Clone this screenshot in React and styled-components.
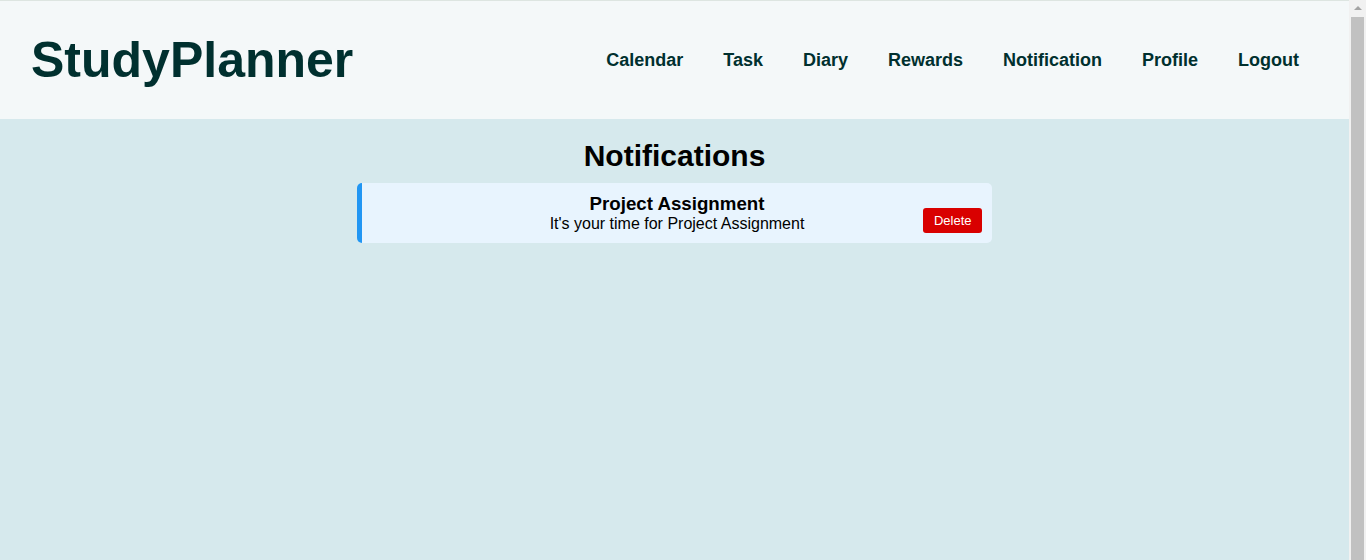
import React from "react";
import styled, { createGlobalStyle } from "styled-components";

const GlobalStyle = createGlobalStyle`
  html, body {
    margin: 0;
    padding: 0;
    overflow: hidden;
  }
  body {
    font-family: "Liberation Sans", Arial, sans-serif;
    background: #d6e9ed;
  }
  * { box-sizing: border-box; }
`;

const Shell = styled.div`
  display: flex;
  height: 100vh;
`;

const Page = styled.div`
  flex: 1;
  min-width: 0;
  display: flex;
  flex-direction: column;
  background: #d6e9ed;
`;

const ScrollTrack = styled.div`
  width: 17px;
  flex: none;
  display: flex;
  flex-direction: column;
  background: #f1f1f1;
`;

const ScrollButton = styled.div`
  height: 17px;
  display: flex;
  align-items: center;
  justify-content: center;
  &::before {
    content: "";
    width: 0;
    height: 0;
    border-left: 4px solid transparent;
    border-right: 4px solid transparent;
    border-bottom: 4px solid #a3a3a3;
    margin-top: -1px;
  }
`;

const ScrollThumb = styled.div`
  flex: 1;
  margin: 0 2px;
  background: #c1c1c1;
`;

const Header = styled.header`
  height: 119px;
  border-top: 1px solid #dde5e1;
  background: #f4f8f9;
  display: flex;
  align-items: center;
  justify-content: space-between;
  padding: 0 50px 0 31px;
`;

const Logo = styled.h1`
  margin: 0;
  font-size: 50px;
  font-weight: 700;
  color: #00302f;
  letter-spacing: 0;
`;

const Nav = styled.nav`
  display: flex;
  align-items: center;
  gap: 40px;
  padding-top: 1px;
`;

const NavLink = styled.a`
  font-size: 18px;
  font-weight: 700;
  color: #00302f;
  text-decoration: none;
  cursor: pointer;
`;

const Main = styled.main`
  flex: 1;
  display: flex;
  flex-direction: column;
  align-items: center;
  padding-top: 20px;
`;

const Title = styled.h2`
  margin: 0 0 10px;
  font-size: 30px;
  font-weight: 700;
  color: #000;
  line-height: 34px;
`;

const Card = styled.div`
  width: 635px;
  min-height: 60px;
  background: #e8f4fe;
  border-left: 5px solid #2196f3;
  border-radius: 5px;
  padding: 10px;
  display: grid;
  grid-template-columns: 1fr auto 1fr;
  align-items: end;
`;

const CardText = styled.div`
  grid-column: 2;
  text-align: center;
  color: #000;
`;

const CardTitle = styled.h3`
  margin: 0;
  font-size: 18.72px;
  font-weight: 700;
  line-height: 21px;
`;

const CardBody = styled.p`
  margin: 0;
  font-size: 16px;
  line-height: 19px;
`;

const DeleteButton = styled.button`
  grid-column: 3;
  justify-self: end;
  align-self: end;
  background: #d90000;
  color: #fff;
  border: none;
  border-radius: 3px;
  height: 25px;
  padding: 0 10.5px;
  font-family: "Liberation Sans", Arial, sans-serif;
  font-size: 13px;
  cursor: pointer;
`;

const links = ["Calendar", "Task", "Diary", "Rewards", "Notification", "Profile", "Logout"];

export default function App() {
  return (
    <>
      <GlobalStyle />
      <Shell>
        <Page>
          <Header>
            <Logo>StudyPlanner</Logo>
            <Nav>
              {links.map((l) => (
                <NavLink key={l}>{l}</NavLink>
              ))}
            </Nav>
          </Header>
          <Main>
            <Title>Notifications</Title>
            <Card>
              <CardText>
                <CardTitle>Project Assignment</CardTitle>
                <CardBody>It's your time for Project Assignment</CardBody>
              </CardText>
              <DeleteButton>Delete</DeleteButton>
            </Card>
          </Main>
        </Page>
        <ScrollTrack>
          <ScrollButton />
          <ScrollThumb />
        </ScrollTrack>
      </Shell>
    </>
  );
}
